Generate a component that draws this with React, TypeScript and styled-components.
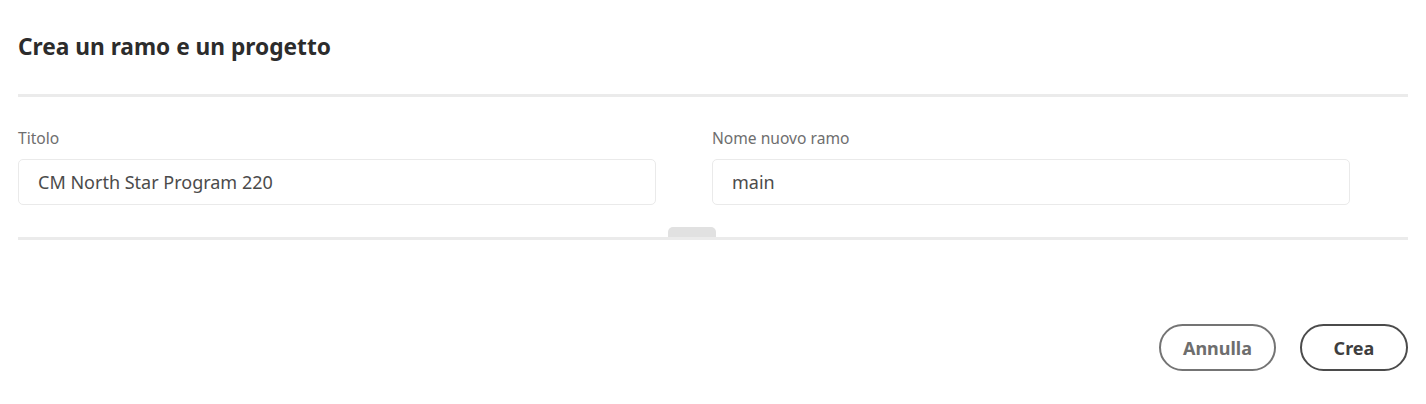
import React from "react";
import styled, { createGlobalStyle } from "styled-components";

const Global = createGlobalStyle`
  html, body { margin: 0; padding: 0; background: #ffffff; }
  body { font-family: "Noto Sans", "Open Sans", sans-serif; }
`;

const Dialog = styled.div`
  width: 1426px;
  height: 404px;
  box-sizing: border-box;
  padding: 0 18px;
  display: flex;
  flex-direction: column;
`;

const Header = styled.header`
  height: 94px;
  display: flex;
  align-items: flex-start;
  box-sizing: border-box;
  padding-top: 31px;
`;

const Title = styled.h2`
  margin: 0;
  font-size: 22.7px;
  line-height: 32px;
  font-weight: 700;
  color: #2c2c2c;
`;

const Divider = styled.div`
  height: 3px;
  background: #ebebeb;
  position: relative;
`;

const Handle = styled.div`
  position: absolute;
  left: 650px;
  top: -10px;
  width: 48px;
  height: 10px;
  background: #e1e1e1;
  border-radius: 5px 5px 0 0;
`;

const Form = styled.div`
  display: grid;
  grid-template-columns: 694px 1fr;
  padding-top: 31px;
  height: 140px;
  box-sizing: border-box;
`;

const Field = styled.label`
  display: flex;
  flex-direction: column;
  width: 638px;
`;

const Label = styled.span`
  font-size: 15.6px;
  line-height: 20px;
  color: #6e6e6e;
  margin-bottom: 11px;
`;

const Input = styled.div`
  height: 46px;
  box-sizing: border-box;
  border: 1px solid #eaeaea;
  border-radius: 5px;
  padding: 0 19px;
  display: flex;
  align-items: center;
  font-size: 18px;
  color: #4b4b4b;
`;

const Footer = styled.footer`
  display: flex;
  justify-content: flex-end;
  gap: 24px;
  padding-top: 84px;
`;

const Button = styled.button<{ $strong?: boolean }>`
  height: 47px;
  box-sizing: border-box;
  padding: 0 22px;
  min-width: ${(p) => (p.$strong ? "108px" : "117px")};
  border-radius: 24px;
  background: #fff;
  border: 2.5px solid ${(p) => (p.$strong ? "#4b4b4b" : "#747474")};
  color: ${(p) => (p.$strong ? "#3e3e3e" : "#6e6e6e")};
  font-family: "Noto Sans", "Open Sans", sans-serif;
  font-weight: 700;
  font-size: 18px;
  cursor: pointer;
`;

export default function App() {
  return (
    <>
      <Global />
      <Dialog>
        <Header>
          <Title>Crea un ramo e un progetto</Title>
        </Header>
        <Divider />
        <Form>
          <Field>
            <Label>Titolo</Label>
            <Input>CM North Star Program 220</Input>
          </Field>
          <Field>
            <Label>Nome nuovo ramo</Label>
            <Input>main</Input>
          </Field>
        </Form>
        <Divider>
          <Handle />
        </Divider>
        <Footer>
          <Button>Annulla</Button>
          <Button $strong>Crea</Button>
        </Footer>
      </Dialog>
    </>
  );
}
